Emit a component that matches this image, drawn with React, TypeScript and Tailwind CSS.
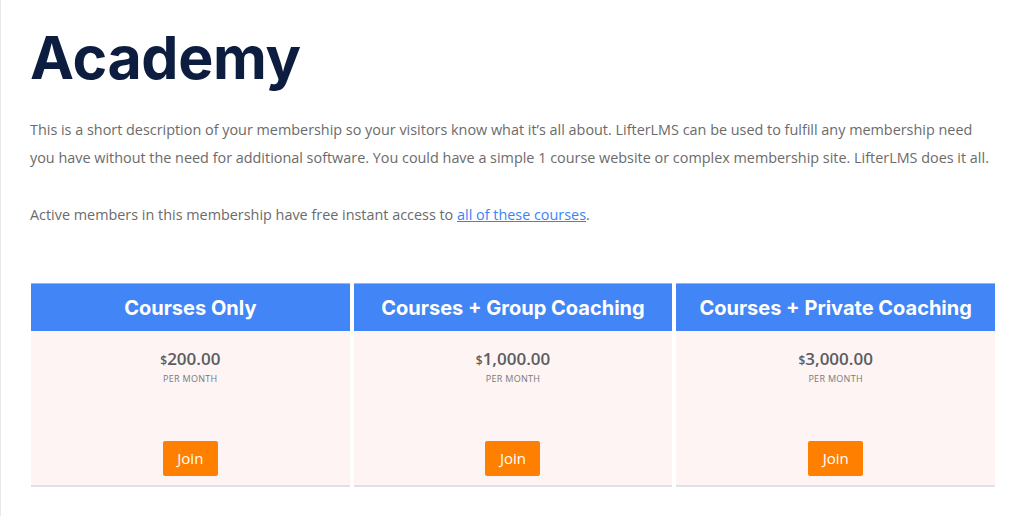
import React from 'react';

const plans = [
  { name: 'Courses Only', price: '200.00' },
  { name: 'Courses + Group Coaching', price: '1,000.00' },
  { name: 'Courses + Private Coaching', price: '3,000.00' },
];

const PlanCard: React.FC<{ name: string; price: string }> = ({ name, price }) => (
  <div className="flex flex-col border-b-2 border-[#dfe1e6]">
    <div className="h-[48px] flex items-center justify-center bg-[#4285f7] border-t border-[#8fb5fb]">
      <h3 className="text-white font-bold text-[20px]" style={{ fontFamily: 'Inter, sans-serif' }}>
        {name}
      </h3>
    </div>
    <div className="h-[154px] bg-[#fdf4f3] flex flex-col items-center pt-[19px]">
      <div className="text-[#5b5d62] font-semibold leading-none" style={{ fontFamily: '"Open Sans", sans-serif' }}>
        <span className="text-[12px]">$</span>
        <span className="text-[17px]">{price}</span>
      </div>
      <div className="mt-[5px] text-[9px] uppercase tracking-[0.3px] text-[#777a80]" style={{ fontFamily: '"Open Sans", sans-serif' }}>
        per month
      </div>
      <button className="mt-auto mb-[9px] w-[55px] h-[35px] rounded-[2px] bg-[#ff8000] text-white text-[15px]" style={{ fontFamily: '"Open Sans", sans-serif' }}>
        Join
      </button>
    </div>
  </div>
);

export default function App() {
  return (
    <div className="w-[1024px] h-[516px] bg-white border-l border-[#e8e8e8] overflow-hidden">
      <div className="pl-[29px] pr-[30px] pt-[22px]">
        <h1 className="text-[59px] font-bold leading-[72px] text-[#0c1d40] tracking-[-0.3px]" style={{ fontFamily: 'Inter, sans-serif' }}>
          Academy
        </h1>
        <div className="mt-[22px] text-[14.4px] leading-[28px] text-[#6b6b6b]" style={{ fontFamily: '"Open Sans", sans-serif' }}>
          <p>
            This is a short description of your membership so your visitors know what it’s all about. LifterLMS can be used to fulfill any membership need you have without the need for additional software. You could have a simple 1 course website or complex membership site. LifterLMS does it all.
          </p>
          <p className="mt-[29px]">
            Active members in this membership have free instant access to{' '}
            <a href="#" className="text-[#3c82f6] underline">all of these courses</a>.
          </p>
        </div>
        <div className="mt-[54px] ml-[1px] w-[964px] grid grid-cols-3 gap-[4px]">
          {plans.map((p) => (
            <PlanCard key={p.name} name={p.name} price={p.price} />
          ))}
        </div>
      </div>
    </div>
  );
}
